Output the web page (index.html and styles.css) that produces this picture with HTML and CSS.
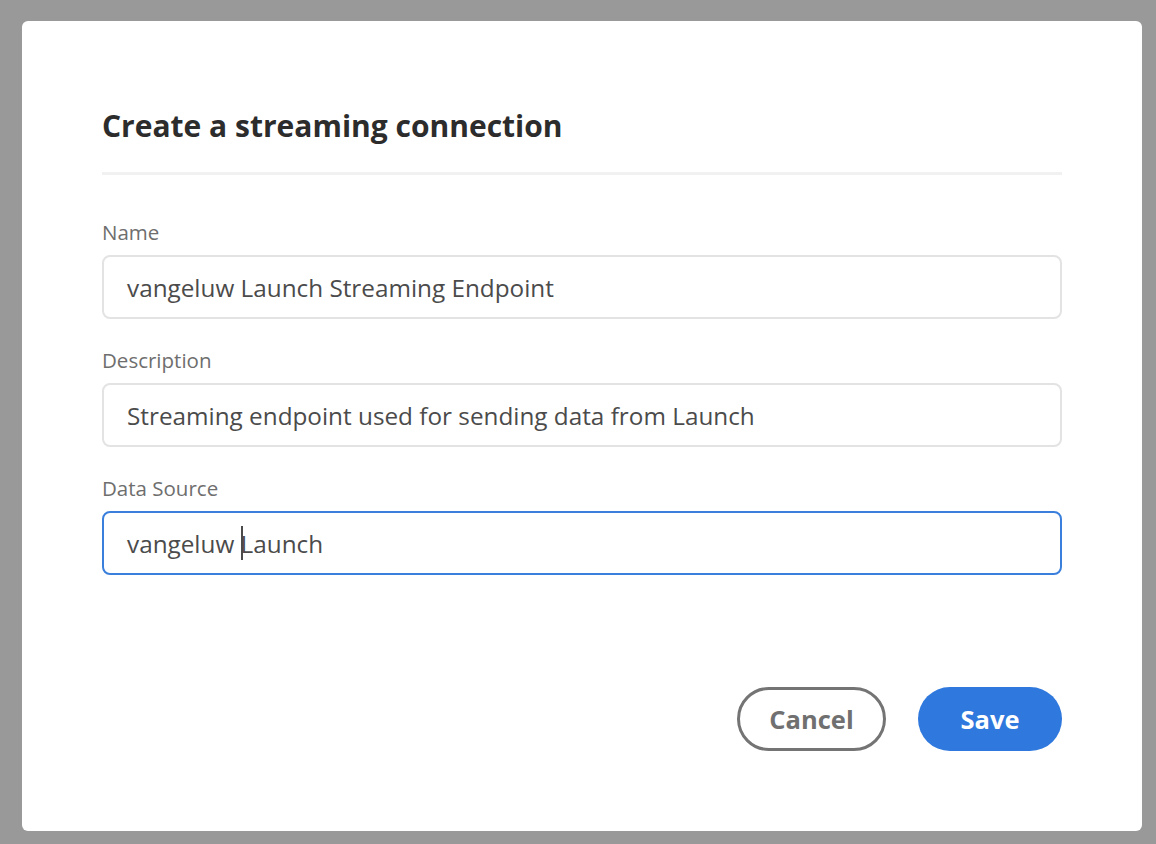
FILE: index.html
```html
<!DOCTYPE html>
<html lang="en">
<head>
<meta charset="utf-8">
<title>Create a streaming connection</title>
<link rel="stylesheet" href="styles.css">
</head>
<body>
<div class="overlay">
  <div class="dialog">
    <h1 class="title">Create a streaming connection</h1>
    <div class="divider"></div>
    <div class="field">
      <label class="label">Name</label>
      <div class="input">vangeluw Launch Streaming Endpoint</div>
    </div>
    <div class="field">
      <label class="label">Description</label>
      <div class="input">Streaming endpoint used for sending data from Launch</div>
    </div>
    <div class="field">
      <label class="label">Data Source</label>
      <div class="input focused">vangeluw <span class="caret"></span>Launch</div>
    </div>
    <div class="actions">
      <button class="btn cancel">Cancel</button>
      <button class="btn save">Save</button>
    </div>
  </div>
</div>
</body>
</html>
```

FILE: styles.css
```css
html, body {
  margin: 0;
  padding: 0;
  height: 100%;
}
body {
  background: #999999;
  font-family: "Open Sans", "Liberation Sans", sans-serif;
}
.overlay {
  padding: 21px 14px 13px 22px;
  box-sizing: border-box;
  height: 100%;
}
.dialog {
  background: #ffffff;
  border-radius: 6px;
  height: 810px;
  width: 1120px;
  box-sizing: border-box;
  padding: 85px 80px 0 80px;
  display: flex;
  flex-direction: column;
}
.title {
  margin: 0;
  font-size: 30px;
  font-weight: 700;
  color: #2c2c2c;
  line-height: 40px;
}
.divider {
  height: 3px;
  background: #f1f1f1;
  margin-top: 26px;
  margin-bottom: 45px;
}
.field {
  display: flex;
  flex-direction: column;
  margin-bottom: 29px;
}
.label {
  font-size: 20.5px;
  color: #6e6e6e;
  line-height: 24px;
  margin-bottom: 11px;
}
.input {
  height: 64px;
  box-sizing: border-box;
  border: 2px solid #e3e3e3;
  border-radius: 8px;
  padding: 0 23px;
  display: flex;
  align-items: center;
  font-size: 24.3px;
  color: #4b4b4b;
  white-space: pre;
}
.input.focused {
  border-color: #3a7fdc;
}
.caret {
  display: inline-block;
  width: 2px;
  height: 34px;
  background: #4b4b4b;
  margin-right: -2px;
}
.actions {
  display: flex;
  justify-content: flex-end;
  gap: 32px;
  margin-top: 83px;
}
.btn {
  height: 64px;
  border-radius: 32px;
  font-family: inherit;
  font-size: 25.5px;
  font-weight: 700;
  box-sizing: border-box;
  cursor: pointer;
}
.cancel {
  width: 149px;
  background: #ffffff;
  border: 3px solid #747474;
  color: #707070;
}
.save {
  width: 144px;
  background: #2f78dd;
  border: none;
  color: #ffffff;
}
```
